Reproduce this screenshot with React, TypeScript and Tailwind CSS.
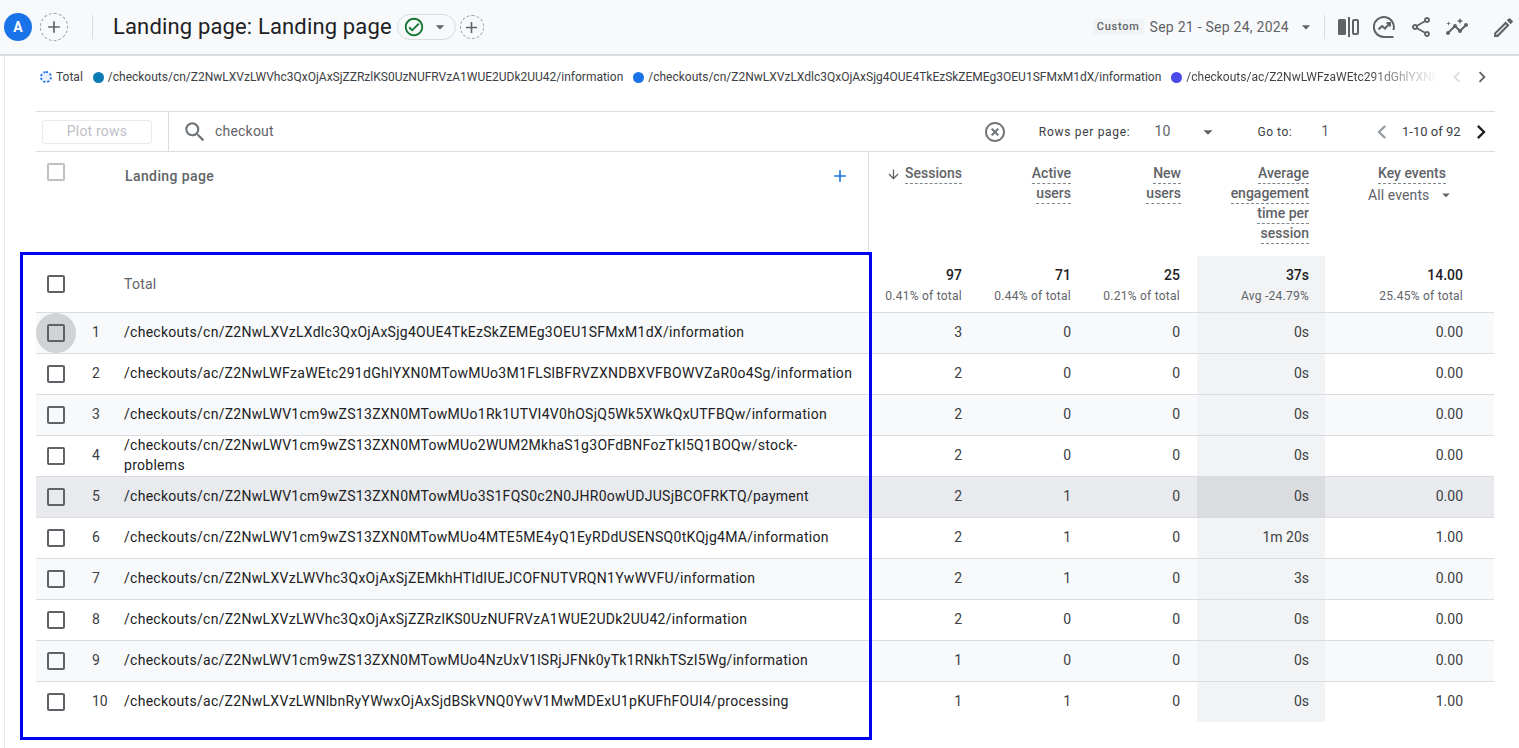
import {
  MdAdd,
  MdArrowDownward,
  MdArrowDropDown,
  MdChevronLeft,
  MdChevronRight,
  MdHighlightOff,
  MdInsights,
  MdOutlineCheckCircle,
  MdOutlineEdit,
  MdOutlineShare,
  MdSearch,
} from "react-icons/md";

type Row = {
  path: string;
  sessions: string;
  active: string;
  newUsers: string;
  time: string;
  events: string;
};

const rows: Row[] = [
  { path: "/checkouts/cn/Z2NwLXVzLXdlc3QxOjAxSjg4OUE4TkEzSkZEMEg3OEU1SFMxM1dX/information", sessions: "3", active: "0", newUsers: "0", time: "0s", events: "0.00" },
  { path: "/checkouts/ac/Z2NwLWFzaWEtc291dGhlYXN0MTowMUo3M1FLSlBFRVZXNDBXVFBOWVZaR0o4Sg/information", sessions: "2", active: "0", newUsers: "0", time: "0s", events: "0.00" },
  { path: "/checkouts/cn/Z2NwLWV1cm9wZS13ZXN0MTowMUo1Rk1UTVI4V0hOSjQ5Wk5XWkQxUTFBQw/information", sessions: "2", active: "0", newUsers: "0", time: "0s", events: "0.00" },
  { path: "/checkouts/cn/Z2NwLWV1cm9wZS13ZXN0MTowMUo2WUM2MkhaS1g3OFdBNFozTkI5Q1BOQw/stock-problems", sessions: "2", active: "0", newUsers: "0", time: "0s", events: "0.00" },
  { path: "/checkouts/cn/Z2NwLWV1cm9wZS13ZXN0MTowMUo3S1FQS0c2N0JHR0owUDJUSjBCOFRKTQ/payment", sessions: "2", active: "1", newUsers: "0", time: "0s", events: "0.00" },
  { path: "/checkouts/cn/Z2NwLWV1cm9wZS13ZXN0MTowMUo4MTE5ME4yQ1EyRDdUSENSQ0tKQjg4MA/information", sessions: "2", active: "1", newUsers: "0", time: "1m 20s", events: "1.00" },
  { path: "/checkouts/cn/Z2NwLXVzLWVhc3QxOjAxSjZEMkhHTldIUEJCOFNUTVRQN1YwWVFU/information", sessions: "2", active: "1", newUsers: "0", time: "3s", events: "0.00" },
  { path: "/checkouts/cn/Z2NwLXVzLWVhc3QxOjAxSjZZRzlKS0UzNUFRVzA1WUE2UDk2UU42/information", sessions: "2", active: "0", newUsers: "0", time: "0s", events: "0.00" },
  { path: "/checkouts/ac/Z2NwLWV1cm9wZS13ZXN0MTowMUo4NzUxV1lSRjJFNk0yTk1RNkhTSzI5Wg/information", sessions: "1", active: "0", newUsers: "0", time: "0s", events: "0.00" },
  { path: "/checkouts/ac/Z2NwLXVzLWNlbnRyYWwxOjAxSjdBSkVNQ0YwV1MwMDExU1pKUFhFOUI4/processing", sessions: "1", active: "1", newUsers: "0", time: "0s", events: "1.00" },
];

function Checkbox({ light }: { light?: boolean }) {
  return (
    <span
      className={
        light
          ? "block h-[18px] w-[18px] rounded-[2px] border-2 border-[#bdc1c6]"
          : "block h-[18px] w-[18px] rounded-[2px] border-2 border-[#5f6368]"
      }
    />
  );
}

function Dot({ color }: { color: string }) {
  return <span className={`mr-[4px] inline-block h-[11px] w-[11px] shrink-0 rounded-full ${color}`} />;
}

function HeadLine({ children }: { children: string }) {
  return <span className="block w-fit self-end border-b border-dashed border-[#80868b] leading-[19px]">{children}</span>;
}

function HeadCell({ lines, className }: { lines: string[]; className: string }) {
  return (
    <div className={`flex flex-col items-end pr-4 pt-[12px] text-[14px] font-medium text-[#5f6368] ${className}`}>
      {lines.map((line) => (
        <HeadLine key={line}>{line}</HeadLine>
      ))}
    </div>
  );
}

function TotalCell({ value, sub, className }: { value: string; sub: string; className: string }) {
  return (
    <div className={`flex flex-col items-end justify-center ${className}`}>
      <span className="text-[14px] font-medium leading-5 text-[#202124]">{value}</span>
      <span className="mt-[3px] text-[12px] leading-4 tracking-[0.25px] text-[#5f6368]">{sub}</span>
    </div>
  );
}

function CompareIcon() {
  return (
    <svg width="21" height="22" viewBox="0 0 21 22" fill="#5f6368">
      <rect x="0" y="3" width="8" height="16" rx="1.5" />
      <rect x="10" y="1" width="2" height="20" />
      <rect x="15" y="4" width="5" height="14" rx="1" fill="none" stroke="#5f6368" strokeWidth="2" />
    </svg>
  );
}

function InsightCircleIcon() {
  return (
    <svg width="22" height="22" viewBox="0 0 22 22" fill="none" stroke="#5f6368" strokeWidth="2">
      <path d="M20.4 14A10 10 0 1 0 11 21h9.5" />
      <path d="M5.5 13.5l3.5-3.5 3 2.5 4.5-5" />
      <path d="M13.5 7h3.5v3.5" />
    </svg>
  );
}

export default function App() {
  return (
    <div className="h-[748px] w-[1519px] overflow-hidden bg-white font-['Roboto',sans-serif] text-[#202124]">
      <header className="flex h-[56px] items-center border-b-2 border-[#dadce0] bg-[#f8f9fa] pl-1 pr-[3px]">
        <span className="flex h-7 w-7 items-center justify-center rounded-full bg-[#1a73e8] text-[14px] font-bold text-white">A</span>
        <span className="ml-2 flex h-7 w-7 items-center justify-center rounded-full border border-dashed border-[#9aa0a6] text-[#5f6368]">
          <MdAdd size={20} />
        </span>
        <span className="ml-[24px] h-[24px] w-px bg-[#dadce0]" />
        <h1 className="mb-px ml-[20px] text-[22px] leading-7 tracking-[0.15px] text-[#202124]">Landing page: Landing page</h1>
        <span className="ml-[5px] flex h-[26px] w-[59px] items-center rounded-full border border-[#dadce0] pl-[5px]">
          <MdOutlineCheckCircle size={22} className="text-[#137333]" />
          <MdArrowDropDown size={20} className="ml-[5px] text-[#5f6368]" />
        </span>
        <span className="ml-1 flex h-6 w-6 items-center justify-center rounded-full border border-dashed border-[#9aa0a6] text-[#5f6368]">
          <MdAdd size={19} />
        </span>
        <span className="ml-auto rounded-[2px] bg-[#f1f3f4] px-1 text-[11px] font-medium leading-4 tracking-[0.75px] text-[#5f6368]">Custom</span>
        <span className="ml-[6px] text-[14px] tracking-[0.25px] text-[#5f6368]">Sep 21 - Sep 24, 2024</span>
        <MdArrowDropDown size={20} className="ml-[7px] text-[#5f6368]" />
        <span className="ml-[8px] h-[24px] w-px bg-[#dadce0]" />
        <span className="ml-[13px]"><CompareIcon /></span>
        <span className="ml-[14px]"><InsightCircleIcon /></span>
        <MdOutlineShare size={24} className="ml-[14px] text-[#5f6368]" />
        <MdInsights size={24} className="ml-[12px] text-[#5f6368]" />
        <MdOutlineEdit size={25} className="ml-[22px] text-[#5f6368]" />
      </header>

      <main className="ml-1 h-[692px] border-l border-[#e8eaed] pl-[31px] pr-[24px]">
        <div className="relative flex h-[55px] items-center pb-[13px] text-[12px] text-[#3c4043]">
          <span className="ml-[4px] mr-[4px] inline-block h-[12px] w-[12px] shrink-0 rounded-full border-2 border-dotted border-[#1a73e8] bg-[#e8f0fe]" />
          <span>Total</span>
          <span className="ml-[10px] flex items-center whitespace-nowrap">
            <Dot color="bg-[#0b7bb3]" />
            /checkouts/cn/Z2NwLXVzLWVhc3QxOjAxSjZZRzlKS0UzNUFRVzA1WUE2UDk2UU42/information
          </span>
          <span className="ml-[10px] flex items-center whitespace-nowrap">
            <Dot color="bg-[#1a73e8]" />
            /checkouts/cn/Z2NwLXVzLXdlc3QxOjAxSjg4OUE4TkEzSkZEMEg3OEU1SFMxM1dX/information
          </span>
          <span className="ml-[10px] flex items-center whitespace-nowrap">
            <Dot color="bg-[#4a4ae8]" />
            <span className="w-[252px] overflow-hidden bg-gradient-to-r from-[#3c4043] from-[72%] to-transparent to-[100%] bg-clip-text text-transparent">/checkouts/ac/Z2NwLWFzaWEtc291dGhlYXN0MTowMUo3M1FLSlBFRVZXNDBX</span>
          </span>
          <MdChevronLeft size={22} className="absolute right-[27px] top-[10px] text-[#dadce0]" />
          <MdChevronRight size={22} className="absolute right-[2px] top-[10px] text-[#5f6368]" />
        </div>

        <div className="flex h-[41px] items-center border-y border-[#dadce0] text-[#5f6368]">
          <div className="flex h-full w-[133px] shrink-0 items-center border-r border-[#dadce0] pl-[6px]">
            <span className="flex h-6 w-[110px] items-center justify-center rounded-[3px] border border-[#e8eaed] text-[14px] tracking-[0.2px] text-[#bdc1c6]">Plot rows</span>
          </div>
          <MdSearch size={26} className="ml-[13px] text-[#70757a]" />
          <span className="mb-[2px] ml-[7px] text-[14px] leading-[18px] tracking-[0.2px]">checkout</span>
          <MdHighlightOff size={24} className="ml-[709px] text-[#70757a]" />
          <span className="ml-[32px] whitespace-nowrap text-[12px] tracking-[0.7px] text-[#3c4043]">Rows per page:</span>
          <span className="ml-[24px] text-[14px] tracking-[0.2px]">10</span>
          <MdArrowDropDown size={22} className="ml-[26px]" />
          <span className="ml-[39px] text-[12px] tracking-[0.5px] text-[#3c4043]">Go to:</span>
          <span className="ml-[29px] text-[14px]">1</span>
          <MdChevronLeft size={28} className="ml-[39px] text-[#9aa0a6]" />
          <span className="ml-[6px] text-[13px] text-[#3c4043]">1-10 of 92</span>
          <MdChevronRight size={28} className="ml-[6px] mr-[-4px] text-[#202124]" />
        </div>

        <div className="grid grid-cols-[833px_109px_109px_110px_128px_169px]">
          <div className="relative h-[104px] border-r border-[#dadce0] pl-[11px] pt-[11px]">
            <Checkbox light />
            <span className="absolute left-[89px] top-[14px] text-[14px] font-medium leading-5 tracking-[0.4px] text-[#5f6368]">Landing page</span>
            <MdAdd size={20} className="absolute right-[18px] top-[14px] text-[#1a73e8]" />
          </div>
          <div className="relative">
            <HeadCell lines={["Sessions"]} className="h-[104px]" />
            <MdArrowDownward size={15} className="absolute left-[17px] top-[15px] text-[#5f6368]" />
          </div>
          <HeadCell lines={["Active", "users"]} className="" />
          <HeadCell lines={["New", "users"]} className="" />
          <HeadCell lines={["Average", "engagement", "time per", "session"]} className="" />
          <div className="flex flex-col items-start pt-[12px] text-[14px] text-[#5f6368]">
            <span className="ml-[53px] border-b border-dashed border-[#80868b] font-medium leading-[19px]">Key events</span>
            <span className="ml-[43px] mt-[1px] flex items-center leading-5 tracking-[0.1px]">
              All events
              <MdArrowDropDown size={18} className="ml-[8px]" />
            </span>
          </div>

          <div className="flex h-[57px] items-center border-b border-[#dadce0]">
            <span className="ml-[11px]"><Checkbox /></span>
            <span className="ml-[59px] text-[14px] tracking-[0.25px] text-[#5f6368]">Total</span>
          </div>
          <TotalCell value="97" sub="0.41% of total" className="border-b border-[#dadce0] pr-4" />
          <TotalCell value="71" sub="0.44% of total" className="border-b border-[#dadce0] pr-4" />
          <TotalCell value="25" sub="0.21% of total" className="border-b border-[#dadce0] pr-[17px]" />
          <TotalCell value="37s" sub="Avg -24.79%" className="border-b border-[#dadce0] bg-[#f1f3f4] pr-4" />
          <TotalCell value="14.00" sub="25.45% of total" className="border-b border-[#dadce0] pr-[31px]" />

          {rows.map((row, i) => {
            const hovered = i === 4;
            const last = i === rows.length - 1;
            const bg = hovered ? "bg-[#e8eaed]" : i % 2 === 0 ? "bg-[#f8f9fa]" : "bg-white";
            const line = last ? "h-[40px]" : "h-[41px] border-b border-[#dadce0]";
            const numCell = `flex items-center justify-end pb-[2px] text-[14px] text-[#3c4043] ${bg} ${line}`;
            return (
              <div key={row.path} className="contents">
                <div className={`flex items-center ${bg} ${line}`}>
                  <span className="relative ml-[11px] shrink-0">
                    {i === 0 && <span className="absolute left-[-11px] top-[-11px] h-10 w-10 rounded-full bg-[#d2d3d4]" />}
                    <span className="relative block"><Checkbox /></span>
                  </span>
                  <span className="mb-[2px] w-[59px] shrink-0 pl-[27px] text-[14px] leading-5 text-[#3c4043]">{i + 1}</span>
                  <span className="mb-[2px] w-[730px] text-[14px] font-normal leading-5 tracking-[0.28px] text-[#202124]">{row.path}</span>
                </div>
                <div className={`${numCell} pr-4`}>{row.sessions}</div>
                <div className={`${numCell} pr-4`}>{row.active}</div>
                <div className={`${numCell} pr-[17px]`}>{row.newUsers}</div>
                <div className={`flex items-center justify-end pb-[2px] pr-4 text-[14px] text-[#3c4043] ${hovered ? "bg-[#dadce0]" : "bg-[#f1f3f4]"} ${line}`}>{row.time}</div>
                <div className={`${numCell} pr-[31px]`}>{row.events}</div>
              </div>
            );
          })}
        </div>
      </main>

      <div className="absolute left-[20px] top-[252px] h-[488px] w-[852px] border-[3px] border-[#0000f5]" />
    </div>
  );
}
